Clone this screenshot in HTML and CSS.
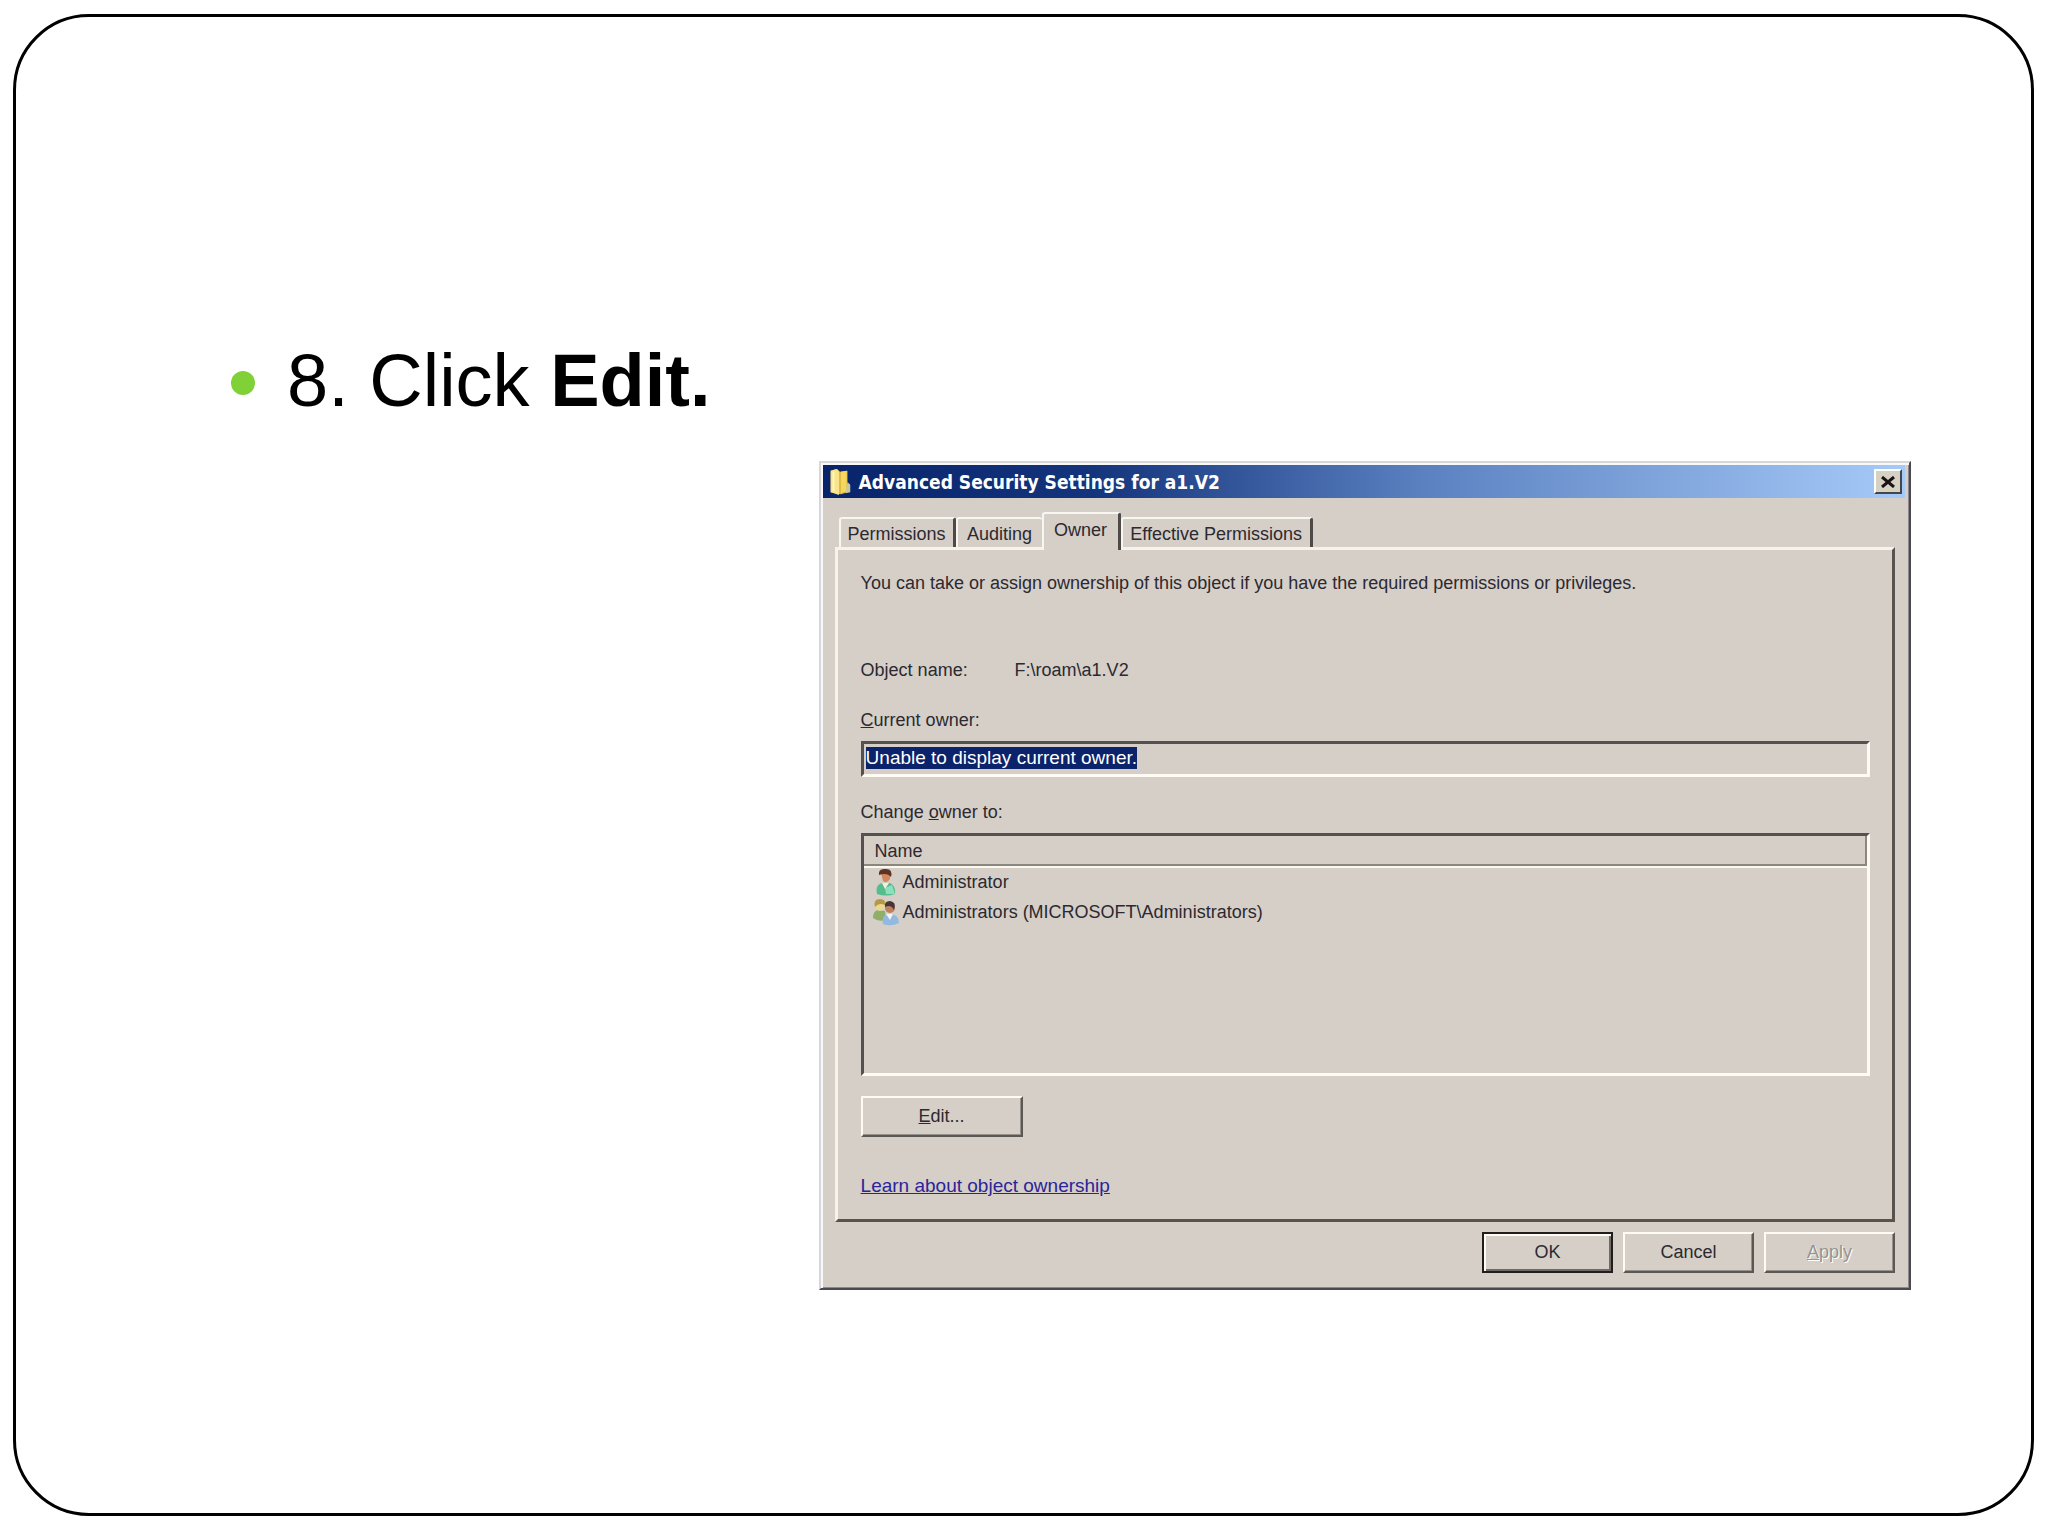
FILE: index.html
```
<!DOCTYPE html>
<html lang="en">
<head>
<meta charset="utf-8">
<title>Advanced Security Settings</title>
<link rel="stylesheet" href="styles.css">
</head>
<body>
<main class="slide">
  <ul class="steps">
    <li class="step">8. Click <strong>Edit.</strong></li>
  </ul>
  <div class="stage">
    <section class="dialog" role="dialog" aria-labelledby="dialog-title">
      <header class="titlebar">
        <svg class="folder" viewBox="0 0 24 30" aria-hidden="true">
          <path d="M2 3 L9 1 L12 4 L20 3 V26 L13 28 L2 26Z" fill="#e3b93c"/>
          <path d="M2 3 L8 1 L11 4 V29 L2 26Z" fill="#f8e58a"/>
          <path d="M13 4 L19 3 V25 L13 27Z" fill="#f3d763"/>
          <path d="M20 15 L23 18 V26 L18 27Z" fill="#c9c79b"/>
          <path d="M5 4 V25" stroke="#fff7bd" stroke-width="2"/>
        </svg>
        <h1 class="title" id="dialog-title">Advanced Security Settings for a1.V2</h1>
        <button class="close" type="button" aria-label="Close">
          <svg class="cross" viewBox="0 0 14 12" aria-hidden="true"><path d="M1 1 L13 11 M13 1 L1 11" stroke="#1c1216" stroke-width="3"/></svg>
        </button>
      </header>
      <div class="tabs" role="tablist">
        <button class="tab tab-permissions" type="button" role="tab">Permissions</button>
        <button class="tab tab-auditing" type="button" role="tab">Auditing</button>
        <button class="tab tab-active" type="button" role="tab" aria-selected="true">Owner</button>
        <button class="tab tab-effective" type="button" role="tab">Effective Permissions</button>
      </div>
      <div class="panel" role="tabpanel">
        <p class="intro">You can take or assign ownership of this object if you have the required permissions or privileges.</p>
        <dl class="object">
          <dt class="object-label">Object name:</dt>
          <dd class="object-value">F:\roam\a1.V2</dd>
        </dl>
        <label class="label" for="owner"><u>C</u>urrent owner:</label>
        <input class="field" id="owner" type="text" value="Unable to display current owner." readonly>
        <p class="label" id="change">Change <u>o</u>wner to:</p>
        <div class="list">
          <table class="owners" aria-labelledby="change">
            <thead><tr><th class="column">Name</th></tr></thead>
            <tbody>
              <tr><td class="cell"><div class="entry">
                <svg class="person" viewBox="0 0 28 28" aria-hidden="true">
                  <path d="M5 26 Q3 17 10 15 L18 15 Q24 18 23 26 Q14 29 5 26Z" fill="#55bd8c"/>
                  <path d="M14 26 L13 20 L20 17 L23 26Z" fill="#8de0bb"/>
                  <path d="M10 15 L13 21 L17 15Z" fill="#f3eee0"/>
                  <path d="M9 5 Q13 1 18 5 V11 Q15 16 11 13Z" fill="#d3875c"/>
                  <path d="M7 7 Q6 0 14 1 Q21 1 19 9 Q15 4 7 7Z" fill="#5d3424"/>
                </svg>Administrator</div></td></tr>
              <tr><td class="cell"><div class="entry">
                <svg class="person" viewBox="0 0 28 28" aria-hidden="true">
                  <path d="M1 20 Q1 12 7 12 L13 13 L14 22 Q6 24 1 20Z" fill="#8fae67"/>
                  <circle cx="8" cy="8" r="5" fill="#ead795"/>
                  <path d="M3 9 Q1 1 8 1 Q14 1 13 7 Q7 4 3 9Z" fill="#b59a43"/>
                  <path d="M11 26 Q9 17 17 16 Q27 16 27 25 Q19 29 11 26Z" fill="#94b9e1"/>
                  <path d="M14 16 L18 22 L21 16Z" fill="#f4f4f0"/>
                  <circle cx="18" cy="10" r="5" fill="#bd8060"/>
                  <path d="M13 9 Q12 3 18 3 Q25 4 22 12 Q19 6 13 9Z" fill="#463638"/>
                </svg>Administrators (MICROSOFT\Administrators)</div></td></tr>
            </tbody>
          </table>
        </div>
        <button class="button edit" type="button"><u>E</u>dit...</button>
        <a class="link" href="#ownership">Learn about object ownership</a>
      </div>
      <footer class="actions">
        <button class="button default" type="button">OK</button>
        <button class="button" type="button">Cancel</button>
        <button class="button" type="button" disabled><u>A</u>pply</button>
      </footer>
    </section>
  </div>
</main>
<script src="script.js"></script>
</body>
</html>
```
FILE: styles.css
```
* { box-sizing: border-box; }

body {
  margin: 0;
  padding: 14px 14px 20px 13px;
  min-height: 100vh;
  display: flex;
  background: #fff;
  font-family: "Liberation Sans", Arial, sans-serif;
}

.slide {
  flex: 1;
  padding-top: 320px;
  border: 3px solid #000;
  border-radius: 76px;
}

.steps {
  margin: 0;
  padding: 0 0 0 215px;
  list-style: none;
}

.step {
  display: flex;
  align-items: center;
  height: 88px;
  white-space: pre;
  font-size: 74px;
  line-height: 88px;
}

.step::before {
  content: "";
  width: 24px;
  height: 24px;
  margin: 4px 32px 0 0;
  border-radius: 50%;
  background: #80d038;
}

.stage {
  display: grid;
  grid-template-columns: 803fr 1093fr 120fr;
  padding-top: 36px;
}

.dialog {
  grid-column: 2;
  padding: 2px 4px 15px 2px;
  border: 2px solid;
  border-color: #d8d6d8 #4b4852 #4b4852 #d8d6d8;
  background: #d5cfc8;
  box-shadow: inset 2px 2px #f8f8f8, inset -1px -1px #8d898b;
  color: #2c2930;
  font-size: 18px;
  line-height: 26px;
}

.dialog button,
.field {
  font: inherit;
  color: inherit;
}

.titlebar {
  display: flex;
  align-items: center;
  height: 33px;
  padding: 0 3px 0 5px;
  background: linear-gradient(to right, #08246b, #14347c 25%, #5a80c0 55%, #a6caf8);
}

.folder { width: 24px; height: 28px; }

.title {
  flex: 1;
  margin: 0 0 0 7px;
  color: #fff;
  font-family: "DejaVu Sans Condensed", "DejaVu Sans", sans-serif;
  font-size: 19px;
  font-weight: bold;
}

.close {
  display: grid;
  place-items: center;
  width: 28px;
  height: 25px;
  padding: 0;
  border: 2px solid;
  border-color: #fff #45464c #45464c #fff;
  background: #d5d2c4;
}

.cross { width: 14px; height: 12px; }

.tabs {
  display: flex;
  align-items: flex-end;
  padding: 14px 0 0 16px;
}

.tab {
  height: 30px;
  padding: 2px 0 0;
  border: solid;
  border-width: 2px 3px 0 2px;
  border-color: #f8f6f0 #4e4a48 #f8f6f0 #f8f6f0;
  border-radius: 3px 3px 0 0;
  background: none;
  text-align: center;
  white-space: nowrap;
}

.tab-permissions { width: 117px; }
.tab-auditing { width: 86px; border-right-width: 0; }

.dialog .tab-active {
  position: relative;
  width: 79px;
  height: 38px;
  margin-bottom: -3px;
  padding-bottom: 6px;
  background: #d5cfc8;
}

.tab-effective { width: 192px; }

.panel {
  display: flex;
  flex-direction: column;
  align-items: flex-start;
  margin: 0 10px 0 12px;
  padding: 20px 22px 20px 23px;
  border: 3px solid;
  border-color: #f6f2ec #57534f #57534f #f6f2ec;
}

.intro { margin: 0 0 61px; }

.object {
  display: flex;
  margin: 0 0 24px;
}

.object-label { width: 154px; }
.object-value { margin: 0; }
.label { margin: 0 0 8px; }

.dialog .field {
  width: 100%;
  height: 36px;
  margin-bottom: 22px;
  padding: 0 2px 2px;
  border: 3px solid;
  border-color: #55514e #fffaf4 #fffaf4 #55514e;
  background: none;
  outline: none;
  font-size: 19px;
}

.field::selection {
  background: rgba(8, 32, 104, 0.99);
  color: #fff;
}

.list {
  width: 100%;
  height: 243px;
  margin-bottom: 20px;
  border: 3px solid;
  border-color: #55514e #fffaf4 #fffaf4 #55514e;
}

.owners {
  width: 100%;
  border-collapse: separate;
  border-spacing: 0;
}

.column {
  height: 30px;
  padding: 2px 11px 0;
  border: solid;
  border-width: 0 2px 2px 0;
  border-color: #8b877e;
  box-shadow: 0 2px #fbf8ee;
  font-weight: normal;
  line-height: 24px;
  text-align: left;
}

.cell { padding: 0; }

.entry {
  display: flex;
  align-items: center;
  gap: 3px;
  height: 30px;
  padding: 2px 0 0 8px;
}

.person { width: 28px; height: 28px; }

.button {
  width: 131px;
  height: 41px;
  padding: 0 0 2px;
  border: 2px solid;
  border-color: #fffaf2 #5b5753 #5b5753 #fffaf2;
  background: #d5cfc8;
  box-shadow: inset -1px -1px #96918b;
}

.edit {
  width: 162px;
  margin-bottom: 36px;
}

.default {
  border-color: #211d1c;
  box-shadow: inset 2px 2px #fffaf2, inset -2px -2px #6f6a66;
}

.dialog .button:disabled {
  color: #98938f;
  text-shadow: 1px 1px #fff;
}

.link {
  color: #2b2599;
  font-size: 19px;
}

.actions {
  display: flex;
  justify-content: flex-end;
  gap: 10px;
  padding: 10px 10px 0 0;
}
```
FILE: script.js
```
const owner = document.getElementById("owner");
owner.focus({ preventScroll: true });
owner.select();
```
